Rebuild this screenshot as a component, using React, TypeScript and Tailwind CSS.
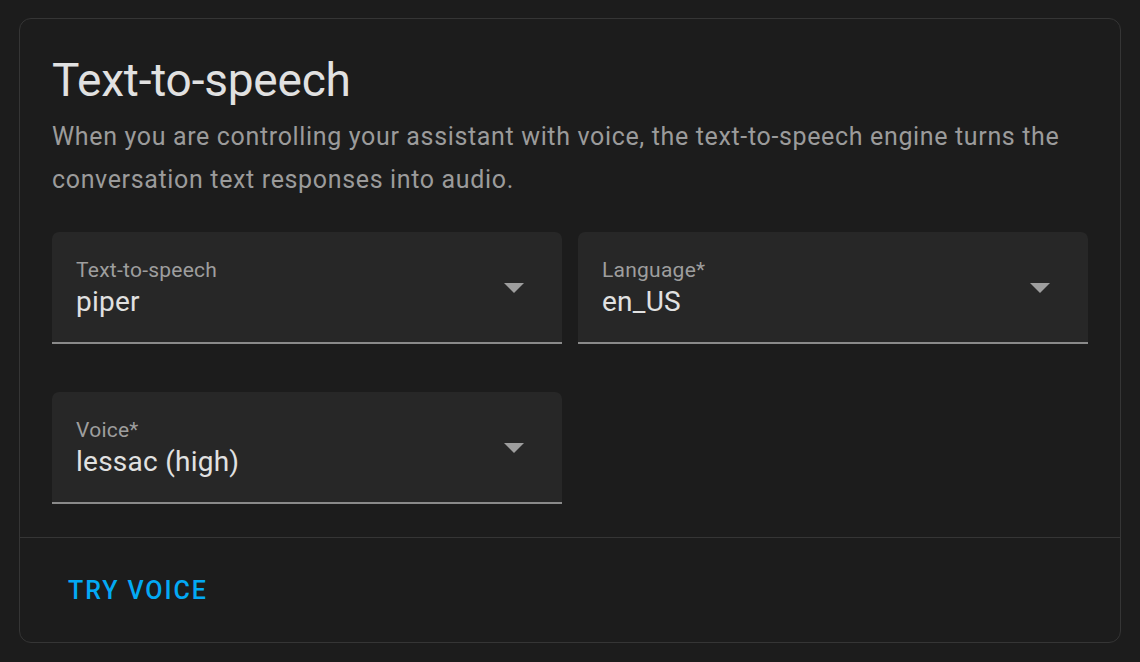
import React from "react";

function Caret() {
  return (
    <svg width="20" height="10" viewBox="0 0 20 10" className="block">
      <path d="M0 0 L20 0 L10 10 Z" fill="#9e9e9e" />
    </svg>
  );
}

function SelectField({ label, value }: { label: string; value: string }) {
  return (
    <div className="relative h-[112px] rounded-t-[7px] bg-[#272727] border-b-2 border-[#8a8a8a] pl-[24px] pt-[26px]">
      <div className="text-[21px] leading-[24px] tracking-[0.25px] text-[#9e9e9e]">{label}</div>
      <div className="mt-[4px] text-[28px] leading-[32px] tracking-[0.25px] text-[#e1e1e1]">{value}</div>
      <div className="absolute right-[38px] top-[51px]">
        <Caret />
      </div>
    </div>
  );
}

export default function App() {
  return (
    <div
      className="h-[662px] w-[1140px] bg-[#1c1c1c] pt-[18px] px-[19px]"
      style={{ fontFamily: "Roboto, 'Noto Sans', sans-serif" }}
    >
      <div className="h-[625px] rounded-[12px] border border-[#353535] bg-[#1c1c1c]">
        <div className="px-[32px] pt-[33px]">
          <h1 className="text-[46px] leading-[56px] text-[#e1e1e1] tracking-[-0.2px]">Text-to-speech</h1>
          <p className="mt-[7px] text-[25px] leading-[43px] text-[#9b9b9b] tracking-[0.65px]">
            When you are controlling your assistant with voice, the text-to-speech engine turns the conversation text responses into audio.
          </p>
          <div className="mt-[31px] grid grid-cols-2 gap-x-[16px] gap-y-[48px]">
            <SelectField label="Text-to-speech" value="piper" />
            <SelectField label="Language*" value="en_US" />
            <SelectField label="Voice*" value="lessac (high)" />
          </div>
        </div>
        <div className="mt-[33px] border-t border-[#353535] h-[105px] pl-[48px] pt-[38px]">
          <span className="text-[25px] leading-[30px] font-medium tracking-[1.9px] text-[#03a9f4]">TRY VOICE</span>
        </div>
      </div>
    </div>
  );
}
